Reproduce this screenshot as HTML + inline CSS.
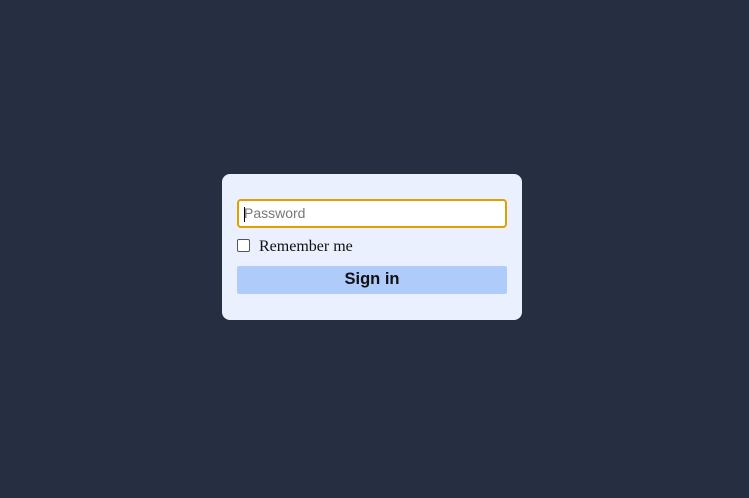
<!DOCTYPE html>
<html><head><style>
html,body{margin:0;padding:0;width:749px;height:498px;background:#262f42;overflow:hidden}
.card{position:absolute;left:222px;top:174px;width:300px;height:146px;background:#ebf0fe;border-radius:8px}
.inp{position:absolute;left:15px;top:25px;width:266px;height:25px;border:2px solid #e0a000;border-radius:4px;background:#fff;font:14px "Liberation Sans",sans-serif;color:#777;line-height:25px;box-sizing:content-box}
.inp span{position:absolute;left:5px;top:0}
.cur{position:absolute;left:5px;top:6px;width:1px;height:15px;background:#000}
.cb{position:absolute;left:15px;top:65px;width:11px;height:11px;border:1px solid #555;border-radius:2px;background:#fff}
.lbl{position:absolute;left:37px;top:63px;font:16px "Liberation Serif",serif;color:#111}
.btn{position:absolute;left:15px;top:92px;width:270px;height:28px;background:#aecbfa;border-radius:2px;font:bold 16.5px "Liberation Sans",sans-serif;color:#111;text-align:center;line-height:27px}
</style></head><body>
<div class="card">
<div class="inp"><span>Password</span><div class="cur"></div></div>
<div class="cb"></div>
<div class="lbl" style="top:64px">Remember me</div>
<div class="btn">Sign in</div>
</div>
</body></html>
